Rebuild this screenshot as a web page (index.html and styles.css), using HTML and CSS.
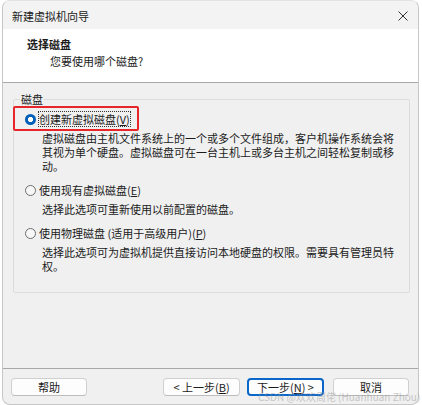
FILE: index.html
```html
<!DOCTYPE html>
<html lang="zh-CN">
<head>
<meta charset="utf-8">
<link rel="stylesheet" href="styles.css">
</head>
<body>
<div class="window">
  <div class="titlebar">
    <span class="title">新建虚拟机向导</span>
    <svg class="close" width="10" height="10" viewBox="0 0 10 10"><path d="M0.5 0.5L9.5 9.5M9.5 0.5L0.5 9.5" stroke="#333" stroke-width="1"/></svg>
  </div>
  <div class="header">
    <div class="h-title">选择磁盘</div>
    <div class="h-sub">您要使用哪个磁盘?</div>
  </div>
  <div class="content">
    <fieldset class="group">
      <legend>磁盘</legend>
      <div class="option">
        <div class="opt-row">
          <span class="highlight"></span>
          <span class="radio checked"></span>
          <span class="label focus">创建新虚拟磁盘(<u>V</u>)</span>
        </div>
        <div class="desc">虚拟磁盘由主机文件系统上的一个或多个文件组成，客户机操作系统会将其视为单个硬盘。虚拟磁盘可在一台主机上或多台主机之间轻松复制或移动。</div>
      </div>
      <div class="option">
        <div class="opt-row">
          <span class="radio"></span>
          <span class="label">使用现有虚拟磁盘(<u>E</u>)</span>
        </div>
        <div class="desc">选择此选项可重新使用以前配置的磁盘。</div>
      </div>
      <div class="option">
        <div class="opt-row">
          <span class="radio"></span>
          <span class="label">使用物理磁盘 (适用于高级用户)(<u>P</u>)</span>
        </div>
        <div class="desc">选择此选项可为虚拟机提供直接访问本地硬盘的权限。需要具有管理员特权。</div>
      </div>
    </fieldset>
  </div>
  <div class="footer">
    <button class="btn help">帮助</button>
    <div class="spacer"></div>
    <button class="btn back">&lt; 上一步(<u>B</u>)</button>
    <button class="btn next">下一步(<u>N</u>) &gt;</button>
    <button class="btn cancel">取消</button>
  </div>
</div>
<div class="watermark">CSDN @欢欢周佬 (Huanhuan Zhou)</div>
</body>
</html>
```
FILE: styles.css
```css
html, body {
  margin: 0;
  padding: 0;
  background: #ffffff;
}
body {
  position: relative;
  font-family: "Noto Sans CJK SC", "Noto Sans", sans-serif;
  font-size: 11px;
  color: #1b1b1b;
}
.window {
  margin-left: 2px;
  width: 417px;
  height: 405px;
  box-sizing: border-box;
  border: 1px solid #c6c6c6;
  border-top-color: #e2e2e2;
  border-radius: 8px;
  overflow: hidden;
  background: #f0f0f0;
  display: flex;
  flex-direction: column;
}
.titlebar {
  height: 28px;
  flex: none;
  background: #f3f3f3;
  display: flex;
  align-items: center;
  justify-content: space-between;
  padding: 0 10px 0 9px;
}
.title {
  font-size: 11px;
  line-height: 14px;
  color: #1a1a1a;
  margin-top: 2px;
}
.close {
  display: block;
  margin-top: 2px;
}
.header {
  flex: none;
  height: 54px;
  box-sizing: border-box;
  background: #ffffff;
  border-bottom: 1px solid #a8a8a8;
  padding: 8px 0 0 24px;
}
.h-title {
  font-weight: bold;
  line-height: 14px;
  font-size: 11px;
}
.h-sub {
  line-height: 14px;
  margin: 3px 0 0 23px;
}
.content {
  flex: none;
  height: 286px;
  box-sizing: border-box;
  border-bottom: 1px solid #a8a8a8;
  padding: 9px 8px 0 10px;
}
.group {
  margin: 0;
  height: 201px;
  box-sizing: border-box;
  border: 1px solid #dcdcdc;
  border-radius: 2px;
  padding: 0 8px 0 6px;
}
.group legend {
  padding: 0 1px;
  line-height: 14px;
}
.option {
  padding-left: 5px;
}
.option + .option {
  margin-top: 10px;
}
.option:first-of-type {
  margin-top: 6px;
}
.opt-row {
  position: relative;
  display: flex;
  align-items: center;
  height: 14px;
  line-height: 14px;
}
.radio {
  flex: none;
  width: 11px;
  height: 11px;
  box-sizing: border-box;
  border-radius: 50%;
  border: 1px solid #6d6d6d;
  background: #f7f7f7;
  margin-right: 3px;
}
.radio.checked {
  border: none;
  background: radial-gradient(circle, #ffffff 0 2.4px, #005fb8 2.9px);
}
.label u, .btn u {
  text-decoration: underline;
  text-underline-offset: 1px;
}
.label.focus {
  outline: 1px dotted #333;
  outline-offset: 0;
}
.highlight {
  position: absolute;
  left: -12px;
  top: -6px;
  width: 122px;
  height: 21px;
  border: 2px solid #e8262a;
  border-radius: 2px;
}
.desc {
  margin: 5px 0 0 17px;
  line-height: 14px;
  width: 352px;
}
.footer {
  flex: none;
  height: 34px;
  box-sizing: border-box;
  display: flex;
  align-items: flex-start;
  padding: 9px 9px 0 8px;
}
.spacer {
  flex: 1;
}
.btn {
  height: 18px;
  box-sizing: border-box;
  border: 1px solid #d0d0d0;
  border-bottom-color: #bcbcbc;
  border-radius: 4px;
  background: #fdfdfd;
  font-family: "Noto Sans CJK SC", "Noto Sans", sans-serif;
  font-size: 11px;
  line-height: 14px;
  color: #1b1b1b;
  padding: 0;
  text-align: center;
}
.help { width: 76px; }
.back { width: 77px; }
.next {
  width: 77px;
  margin-left: 7px;
  border: 2px solid #0a66c8;
}
.cancel {
  width: 76px;
  margin-left: 9px;
}
.watermark {
  position: absolute;
  left: 258px;
  top: 391px;
  font-family: "Noto Sans CJK SC", "Noto Sans", sans-serif;
  font-size: 10px;
  line-height: 12px;
  color: rgba(150, 150, 150, 0.5);
  white-space: nowrap;
  pointer-events: none;
}
```
